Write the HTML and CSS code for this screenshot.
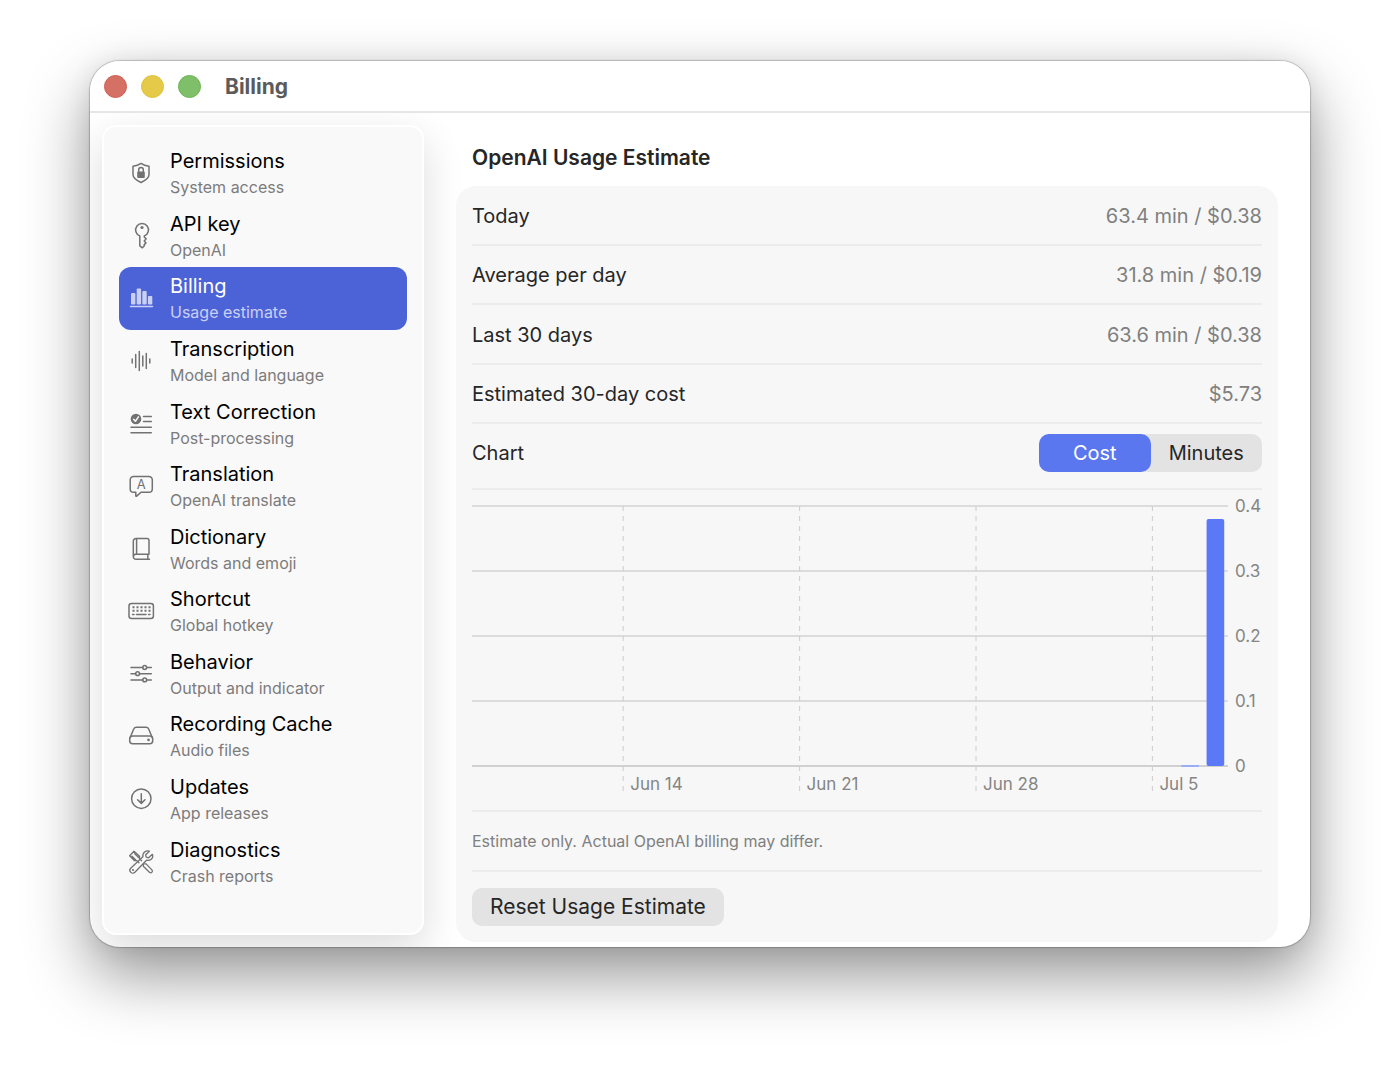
FILE: index.html
```html
<!DOCTYPE html>
<html lang="en">
<head>
    <meta charset="UTF-8">
    <meta name="viewport" content="width=device-width, initial-scale=1.0">
    <title>Billing</title>
    <link rel="stylesheet" href="styles.css">
</head>
<body>
    <div class="window">
        <header class="titlebar">
            <div class="lights">
                <button class="light close" aria-label="Close"></button>
                <button class="light minimize" aria-label="Minimize"></button>
                <button class="light zoom" aria-label="Zoom"></button>
            </div>
            <h1>Billing</h1>
        </header>

        <div class="content">
            <nav class="sidebar">
                <a class="item" href="#permissions">
                    <svg class="icon" viewBox="0 0 28 28">
                        <path d="M14 4.400c2.400 1.700 5 2.500 8 2.800v8.300c0 3.600-3.200 5.800-8 8-4.800-2.200-8-4.400-8-8V7.200c3-.3 5.600-1.100 8-2.800z"/>
                        <path d="M11.700 13v-2.200a2.300 2.300 0 0 1 4.600 0V13"/>
                        <rect class="fill" x="10.200" y="12.500" width="7.600" height="6.500" rx="1"/>
                    </svg>
                    <span class="text"><span class="name">Permissions</span><span class="hint">System access</span></span>
                </a>
                <a class="item" href="#api-key">
                    <svg class="icon" viewBox="0 0 28 28">
                        <path d="M12.800 13.900A6.400 6.400 0 1 1 17.300 13.900v1.200l1.900 1.700-2 2.100 1.800 2-1.800 1.700.2 1.200-2 2-2.600-2z"/>
                        <circle class="fill" cx="15" cy="5.500" r="1.600"/>
                    </svg>
                    <span class="text"><span class="name">API key</span><span class="hint">OpenAI</span></span>
                </a>
                <a class="item active" href="#billing" aria-current="page">
                    <svg class="icon" viewBox="0 0 28 28">
                        <rect class="fill" x="4" y="9" width="4.400" height="11.500" rx="1"/>
                        <rect class="fill" x="9.700" y="4.500" width="4.400" height="16" rx="1"/>
                        <rect class="fill" x="15.300" y="7" width="4.400" height="13.500" rx="1"/>
                        <rect class="fill" x="20.900" y="12" width="4.400" height="8.500" rx="1"/>
                        <path d="M3.500 22.600h22"/>
                    </svg>
                    <span class="text"><span class="name">Billing</span><span class="hint">Usage estimate</span></span>
                </a>
                <a class="item" href="#transcription">
                    <svg class="icon" viewBox="0 0 28 28">
                        <path d="M5.200 12v4M8.700 7.500v13M12.300 4.500v19M15.800 9v10M19.300 6.500v15M22.800 12v4"/>
                    </svg>
                    <span class="text"><span class="name">Transcription</span><span class="hint">Model and language</span></span>
                </a>
                <a class="item" href="#text-correction">
                    <svg class="icon" viewBox="0 0 28 28">
                        <circle class="fill" cx="9" cy="9" r="5.300"/>
                        <path class="check" d="M6.700 9.300l1.700 2 3-4.500"/>
                        <path d="M16.500 6.500h7.800M16.500 11.600h7.800M4 17.200h20.300M4 22.700h20.300"/>
                    </svg>
                    <span class="text"><span class="name">Text Correction</span><span class="hint">Post-processing</span></span>
                </a>
                <a class="item" href="#translation">
                    <svg class="icon" viewBox="0 0 28 28">
                        <path d="M6.500 4.500h15.500a3.300 3.300 0 0 1 3.300 3.300v9.200a3.300 3.300 0 0 1-3.300 3.300h-8l-4.300 3.800c-.4.400-.9.200-.9-.4v-3.400H6.500A3.300 3.300 0 0 1 3.200 17V7.800a3.300 3.300 0 0 1 3.300-3.300z"/>
                        <text x="14.300" y="17" text-anchor="middle">A</text>
                    </svg>
                    <span class="text"><span class="name">Translation</span><span class="hint">OpenAI translate</span></span>
                </a>
                <a class="item" href="#dictionary">
                    <svg class="icon" viewBox="0 0 28 28">
                        <path d="M9 3.500h11a2 2 0 0 1 2 2v13.800H8.800a2.400 2.400 0 0 0 0 4.900H22.500M20.800 19.500v4.500M6.300 21.500V6.200A2.700 2.700 0 0 1 9 3.500M9.600 3.700v15.500"/>
                    </svg>
                    <span class="text"><span class="name">Dictionary</span><span class="hint">Words and emoji</span></span>
                </a>
                <a class="item" href="#shortcut">
                    <svg class="icon" viewBox="0 0 28 28">
                        <rect x="2" y="6.500" width="24.400" height="15" rx="2.500"/>
                        <path class="keys" d="M5.500 10.300h18M5.500 13.800h18"/>
                        <path d="M5.500 17.500h1.500M9.500 17.500h9.500M21.500 17.500h1.500"/>
                    </svg>
                    <span class="text"><span class="name">Shortcut</span><span class="hint">Global hotkey</span></span>
                </a>
                <a class="item" href="#behavior">
                    <svg class="icon" viewBox="0 0 28 28">
                        <path d="M4 7.500h11.700M19.700 7.500h4.600M4 13.700h4.600M12.600 13.700h11.700M4 19.900h11.700M19.700 19.900h4.600"/>
                        <circle cx="17.700" cy="7.500" r="1.900"/>
                        <circle cx="10.600" cy="13.700" r="1.900"/>
                        <circle cx="17.700" cy="19.900" r="1.900"/>
                    </svg>
                    <span class="text"><span class="name">Behavior</span><span class="hint">Output and indicator</span></span>
                </a>
                <a class="item" href="#recording-cache">
                    <svg class="icon" viewBox="0 0 28 28">
                        <path d="M3.200 15.500L6.600 7.200a3.200 3.200 0 0 1 3-1.900h9.200a3.200 3.200 0 0 1 3 1.900l3.400 8.300"/>
                        <rect x="2.700" y="14" width="23" height="7.800" rx="3"/>
                        <circle class="fill" cx="21.500" cy="17.900" r="1.300"/>
                    </svg>
                    <span class="text"><span class="name">Recording Cache</span><span class="hint">Audio files</span></span>
                </a>
                <a class="item" href="#updates">
                    <svg class="icon" viewBox="0 0 28 28">
                        <circle cx="14.300" cy="13.700" r="9.700"/>
                        <path d="M14.300 8.700v9.500M10.600 14.700l3.700 3.700 3.700-3.700"/>
                    </svg>
                    <span class="text"><span class="name">Updates</span><span class="hint">App releases</span></span>
                </a>
                <a class="item" href="#diagnostics">
                    <svg class="icon thin" viewBox="0 0 28 28">
                        <path d="M2.600 7.700L7 3.200l5.600 5-.2 2.200 2.200 2.300M2.600 7.700l4.900 5 2.300-.1 2.200 2.200M5 8.300l4 4M7.700 5.700l4.200 4M17.300 15.800l1.800.1 6 6.200c1 1.500-.8 3.400-2.400 2.400l-6.400-6.200v-1.800"/>
                        <path d="M25.400 6.300l-3.800 3.500-2.400-.6-.5-2.400 3.700-3.600c-3.400-1.300-7.200 1.400-6.500 5.600L3.700 20.300a2.800 2.800 0 0 0 4.200 4L19.500 12.200c4.200.8 7.300-2.200 5.900-5.900z"/>
                        <circle class="fill" cx="6" cy="22" r="1.100"/>
                    </svg>
                    <span class="text"><span class="name">Diagnostics</span><span class="hint">Crash reports</span></span>
                </a>
            </nav>

            <main class="pane">
                <h2>OpenAI Usage Estimate</h2>

                <section class="card">
                    <dl class="stats">
                        <div class="row"><dt>Today</dt><dd>63.4 min / $0.38</dd></div>
                        <div class="row"><dt>Average per day</dt><dd>31.8 min / $0.19</dd></div>
                        <div class="row"><dt>Last 30 days</dt><dd>63.6 min / $0.38</dd></div>
                        <div class="row"><dt>Estimated 30-day cost</dt><dd>$5.73</dd></div>
                    </dl>

                    <div class="row chart-mode">
                        <span id="chart-label">Chart</span>
                        <div class="segmented" role="radiogroup" aria-labelledby="chart-label">
                            <input type="radio" name="mode" id="mode-cost" checked>
                            <label for="mode-cost">Cost</label>
                            <input type="radio" name="mode" id="mode-minutes">
                            <label for="mode-minutes">Minutes</label>
                        </div>
                    </div>

                    <div class="chart">
                        <div class="plot">
                            <!-- 30 days wide, one day is 3.333% -->
                            <svg class="graph" role="img" aria-label="Cost per day">
                                <g class="grid">
                                    <line x1="0" x2="100%" y1="1" y2="1"/>
                                    <line x1="0" x2="100%" y1="66" y2="66"/>
                                    <line x1="0" x2="100%" y1="131" y2="131"/>
                                    <line x1="0" x2="100%" y1="196" y2="196"/>
                                    <line class="base" x1="0" x2="100%" y1="261" y2="261"/>
                                </g>
                                <g class="ticks">
                                    <line x1="20%" x2="20%" y1="1" y2="286"/>
                                    <line x1="43.333%" x2="43.333%" y1="1" y2="286"/>
                                    <line x1="66.667%" x2="66.667%" y1="1" y2="286"/>
                                    <line x1="90%" x2="90%" y1="1" y2="286"/>
                                </g>
                                <rect class="bar small" x="93.833%" y="260" width="2.333%" height="2"/>
                                <rect class="bar" x="97.167%" y="14" width="2.333%" height="247" rx="2"/>
                            </svg>
                            <div class="days">
                                <span></span>
                                <span>Jun 14</span>
                                <span>Jun 21</span>
                                <span>Jun 28</span>
                                <span>Jul 5</span>
                            </div>
                        </div>
                        <div class="scale">
                            <span>0.4</span>
                            <span>0.3</span>
                            <span>0.2</span>
                            <span>0.1</span>
                            <span>0</span>
                        </div>
                    </div>

                    <p class="note">Estimate only. Actual OpenAI billing may differ.</p>

                    <div class="actions">
                        <button class="reset">Reset Usage Estimate</button>
                    </div>
                </section>
            </main>
        </div>
    </div>
</body>
</html>
```
FILE: styles.css
```css
* {
    box-sizing: border-box;
}

body {
    display: flex;
    margin: 0;
    min-height: 100vh;
    padding: 61px 90px 119px;
    background: #fff;
    color: #262626;
    font-family: Inter, "Liberation Sans", sans-serif;
    font-size: 20px;
    line-height: 24px;
}

h1, h2, p, dl, dd {
    margin: 0;
}

button {
    border: none;
    padding: 0;
    color: inherit;
    font: inherit;
}

.window {
    flex: 1;
    display: flex;
    flex-direction: column;
    overflow: hidden;
    border-radius: 30px;
    background: #fff;
    box-shadow: 0 0 1px 1px rgba(0, 0, 0, 0.2), 0 28px 64px rgba(0, 0, 0, 0.42), 0 0 24px rgba(0, 0, 0, 0.08);
}

/* title bar */
.titlebar {
    position: relative;
    z-index: 1;
    display: flex;
    align-items: center;
    gap: 24px;
    height: 52px;
    padding: 0 14px;
    border-bottom: 2px solid #e6e6e6;
    background: #fff;
}

.titlebar h1 {
    padding-top: 2px;
    color: #5b5b5b;
    font-size: 21px;
    font-weight: 700;
}

.lights {
    display: flex;
    gap: 14px;
}

.light {
    width: 23px;
    height: 23px;
    border-radius: 50%;
}

.close {
    border: 1px solid #cf5f52;
    background: #d57164;
}

.minimize {
    border: 1px solid #dfc23b;
    background: #e4ca48;
}

.zoom {
    border: 1px solid #6cb555;
    background: #7fbf69;
}

.content {
    flex: 1;
    display: flex;
}

/* sidebar */
.sidebar {
    display: flex;
    flex-direction: column;
    width: 322px;
    margin: 12px 32px 12px 12px;
    padding: 15px 15px 40px;
    border: 2px solid #fff;
    border-radius: 14px;
    background: #f9f9f9;
    box-shadow: 0 14px 40px rgba(0, 0, 0, 0.14);
}

.item {
    flex: 1;
    display: flex;
    align-items: center;
    gap: 15px;
    padding: 0 8px;
    border-radius: 12px;
    color: #000;
    text-decoration: none;
}

.icon {
    width: 28px;
    height: 28px;
    fill: none;
    stroke: #727272;
    stroke-width: 1.5;
    stroke-linecap: round;
    stroke-linejoin: round;
}

.icon.thin {
    stroke-width: 1.3;
}

.icon .fill {
    fill: #727272;
    stroke: none;
}

.icon .check {
    stroke: #f9f9f9;
}

.icon .keys {
    stroke-width: 2;
    stroke-dasharray: 2 2;
    stroke-linecap: butt;
}

.icon text {
    fill: #727272;
    stroke: none;
    font-size: 13px;
}

.text {
    display: flex;
    flex-direction: column;
    gap: 2px;
    padding-top: 2px;
}

.name {
    font-size: 20px;
    line-height: 24px;
}

.hint {
    color: #7c7c7c;
    font-size: 16px;
    line-height: 24px;
}

.active {
    background: #4c63d8;
    color: #fff;
}

.active .hint {
    color: #c9d0f3;
}

.active .icon {
    stroke: #c9d0f3;
}

.active .fill {
    fill: #c9d0f3;
}

/* billing pane */
.pane {
    flex: 1;
    display: flex;
    flex-direction: column;
    padding: 33px 32px 5px 0;
}

.pane h2 {
    margin: 0 16px 16px;
    font-size: 21px;
    font-weight: 600;
}

.card {
    flex: 1;
    display: flex;
    flex-direction: column;
    padding: 0 16px;
    border-radius: 20px;
    background: #f7f7f7;
}

.stats {
    flex: 1;
    display: flex;
    flex-direction: column;
}

.row {
    flex: 1;
    display: flex;
    align-items: center;
    justify-content: space-between;
    padding-top: 2px;
    border-bottom: 2px solid #ececec;
}

.row dd {
    color: #808080;
}

.chart-mode {
    flex: none;
    height: 66px;
    padding: 0 0 6px;
}

.segmented {
    display: grid;
    grid-template-columns: 1fr 1fr;
    width: 223px;
    border-radius: 10px;
    background: #e3e3e3;
}

.segmented input {
    position: absolute;
    opacity: 0;
}

.segmented label {
    border-radius: 10px;
    line-height: 38px;
    text-align: center;
}

.segmented input:checked + label {
    background: #5a77f0;
    color: #fff;
}

/* chart */
.chart {
    display: flex;
    gap: 7px;
    padding: 15px 0 18px;
    border-bottom: 2px solid #ececec;
    color: #858585;
    font-size: 17px;
    line-height: 20px;
}

.plot {
    flex: 1;
}

.graph {
    display: block;
    width: 100%;
    height: 287px;
    overflow: visible;
}

.grid line {
    stroke: #dcdcdc;
    stroke-width: 2;
}

.grid .base {
    stroke: #d0d0d0;
}

.ticks line {
    stroke: #cccccc;
    stroke-dasharray: 5 5;
}

.bar {
    fill: #5b79f7;
}

.bar.small {
    fill: #9dadf5;
}

.days {
    display: grid;
    grid-template-columns: 6fr 7fr 7fr 7fr 3fr;
    height: 18px;
    margin-top: -18px;
}

.days span {
    padding-left: 7px;
    white-space: nowrap;
}

.scale {
    display: flex;
    flex-direction: column;
    justify-content: space-between;
    width: 27px;
    height: 280px;
    margin-top: -9px;
}

.note {
    padding: 19px 0;
    border-bottom: 2px solid #ececec;
    color: #808080;
    font-size: 16px;
    line-height: 20px;
}

.actions {
    padding: 16px 0;
}

.reset {
    height: 38px;
    padding: 0 18px;
    border-radius: 10px;
    background: #e3e3e3;
    font-size: 21px;
}
```
